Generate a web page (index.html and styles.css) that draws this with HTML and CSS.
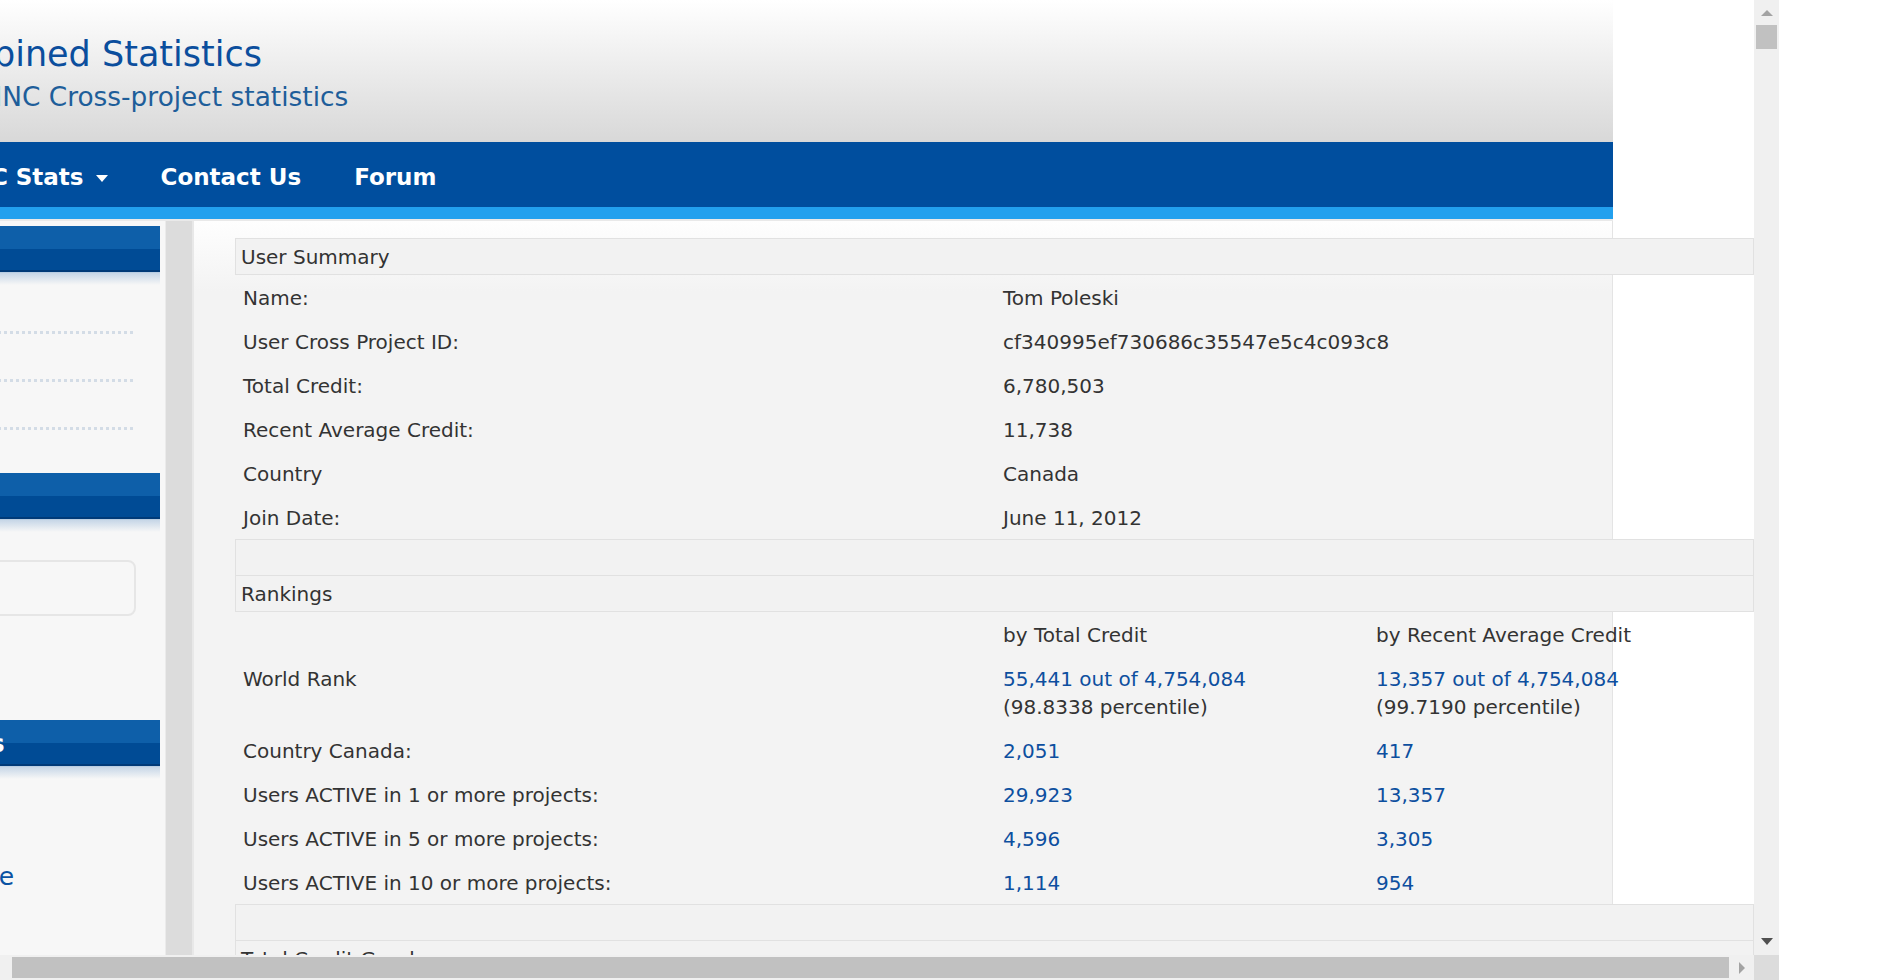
FILE: index.html
```html
<!DOCTYPE html>
<html>
<head>
    <meta charset="UTF-8">
    <title>Combined Statistics - User Summary</title>
    <link rel="stylesheet" href="styles.css">
</head>
<body>
    <div class="screen">
        <div class="viewport">
            <div class="page">
                <header class="masthead">
                    <h1 class="site-title">Combined Statistics</h1>
                    <p class="site-tagline">BOINC Cross-project statistics</p>
                </header>

                <nav class="topnav">
                    <a href="#" class="dropdown">BOINC Stats<span class="caret"></span></a>
                    <a href="#">Contact Us</a>
                    <a href="#">Forum</a>
                </nav>

                <div class="content">
                    <aside class="sidebar">
                        <div class="side-head">Menu</div>
                        <ul class="side-list">
                            <li></li>
                            <li></li>
                            <li></li>
                        </ul>

                        <div class="side-head">Search</div>
                        <div class="search-box"></div>

                        <div class="side-head side-head-long">Project Links</div>
                        <ul class="side-links">
                            <li><a href="#">Your Profile</a></li>
                        </ul>
                    </aside>

                    <div class="gutter"></div>

                    <main class="main">
                        <table class="stats">
                            <colgroup>
                                <col class="col-label">
                                <col class="col-total">
                                <col class="col-recent">
                            </colgroup>
                            <tbody>
                                <tr class="head"><th colspan="3">User Summary</th></tr>
                                <tr><td>Name:</td><td colspan="2">Tom Poleski</td></tr>
                                <tr><td>User Cross Project ID:</td><td colspan="2">cf340995ef730686c35547e5c4c093c8</td></tr>
                                <tr><td>Total Credit:</td><td colspan="2">6,780,503</td></tr>
                                <tr><td>Recent Average Credit:</td><td colspan="2">11,738</td></tr>
                                <tr><td>Country</td><td colspan="2">Canada</td></tr>
                                <tr><td>Join Date:</td><td colspan="2">June 11, 2012</td></tr>

                                <tr class="head"><th colspan="3">&nbsp;</th></tr>
                                <tr class="head"><th colspan="3">Rankings</th></tr>
                                <tr><td></td><td>by Total Credit</td><td>by Recent Average Credit</td></tr>
                                <tr>
                                    <td>World Rank</td>
                                    <td><a href="#">55,441 out of 4,754,084</a><br>(98.8338 percentile)</td>
                                    <td><a href="#">13,357 out of 4,754,084</a><br>(99.7190 percentile)</td>
                                </tr>
                                <tr><td>Country Canada:</td><td><a href="#">2,051</a></td><td><a href="#">417</a></td></tr>
                                <tr><td>Users ACTIVE in 1 or more projects:</td><td><a href="#">29,923</a></td><td><a href="#">13,357</a></td></tr>
                                <tr><td>Users ACTIVE in 5 or more projects:</td><td><a href="#">4,596</a></td><td><a href="#">3,305</a></td></tr>
                                <tr><td>Users ACTIVE in 10 or more projects:</td><td><a href="#">1,114</a></td><td><a href="#">954</a></td></tr>

                                <tr class="head"><th colspan="3">&nbsp;</th></tr>
                                <tr class="head"><th colspan="3">Total Credit Graph</th></tr>
                                <tr><td colspan="3">&nbsp;</td></tr>
                            </tbody>
                        </table>
                    </main>
                </div>
            </div>
        </div>

        <div class="vscroll">
            <span class="arrow-up"></span>
            <span class="thumb"></span>
            <span class="arrow-down"></span>
        </div>
        <div class="hscroll">
            <span class="thumb"></span>
            <span class="arrow-right"></span>
        </div>
        <div class="corner"></div>
    </div>
</body>
</html>
```

FILE: styles.css
```css
:root {
    --title-color: #0b4e9d;
    --nav-color: #004e9e;
    --nav-strip: #22a0ee;
    --link-color: #0d4f9f;
    --text-color: #333333;
    --panel-color: #f3f3f3;
    --side-color: #f7f7f7;
}

* {
    box-sizing: border-box;
}

body {
    margin: 0;
    background-color: #ffffff;
    font-family: "DejaVu Sans", Verdana, sans-serif;
}

/* browser frame: page + scrollbars */
.screen {
    display: grid;
    grid-template-columns: 1754px 25px;
    grid-template-rows: 955px 25px;
    width: 1779px;
    height: 980px;
}

.viewport {
    overflow: hidden;
    background-color: #ffffff;
}

.page {
    width: 1813px;
    margin-left: -200px;
}

/* header */
.masthead {
    height: 142px;
    padding: 33px 0 0 113px;
    background: linear-gradient(#ffffff, #d8d8d8);
}

.site-title {
    margin: 0;
    font-size: 35px;
    font-weight: normal;
    line-height: 42px;
    color: var(--title-color);
}

.site-tagline {
    margin: 7px 0 0 43px;
    font-size: 26.4px;
    line-height: 30px;
    color: #1e5e9a;
}

/* navigation */
.topnav {
    display: flex;
    gap: 53px;
    height: 77px;
    padding: 5px 0 0 126px;
    background: linear-gradient(var(--nav-color) 0 65px, var(--nav-strip) 65px);
}

.topnav a {
    display: flex;
    align-items: center;
    height: 60px;
    color: #ffffff;
    font-size: 23px;
    font-weight: bold;
    text-decoration: none;
}

.caret {
    width: 0;
    height: 0;
    margin: 3px 0 0 12px;
    border-left: 6px solid transparent;
    border-right: 6px solid transparent;
    border-top: 7px solid #ffffff;
}

/* body columns */
.content {
    display: flex;
    border-top: 2px solid #e9e9e9;
}

.sidebar {
    width: 366px;
    padding: 5px 5px 60px 0;
    background-color: var(--side-color);
    border-right: 1px solid #ebebeb;
}

.gutter {
    width: 28px;
    background-color: #dcdcdc;
    border-right: 2px solid #e8e8e8;
}

.main {
    width: 1419px;
    padding: 17px 0 40px 41px;
    background: linear-gradient(#fefefe, var(--panel-color) 70px);
    border-right: 1px solid #e4e4e4;
}

/* sidebar */
.side-head {
    height: 59px;
    padding: 0 0 12px 15px;
    color: #ffffff;
    font-size: 25px;
    font-weight: bold;
    line-height: 47px;
    white-space: nowrap;
    background:
        linear-gradient(#0e5fa9 0 23px, #004b95 23px 44px, #003a78 44px 46px, #b9cde2 46px 47px) top / 100% 47px no-repeat,
        linear-gradient(#c6d6e7, var(--side-color)) bottom / 100% 12px no-repeat;
}

.side-head-long {
    margin-top: 104px;
    padding-left: 22px;
}

.side-list {
    list-style: none;
    margin: 0 0 43px;
    padding: 1px 0 0;
}

.side-list li {
    height: 48px;
    margin-right: 26px;
    background: repeating-linear-gradient(to right, #d3dce6 0 3px, transparent 3px 6px) bottom / 100% 3px no-repeat;
}

.search-box {
    height: 56px;
    margin: 28px 24px 0 0;
    border: 2px solid #e6e6e6;
    border-radius: 8px;
    background-color: var(--side-color);
}

.side-links {
    list-style: none;
    margin: 83px 0 0;
    padding: 0 0 0 75px;
}

.side-links a {
    font-size: 25px;
    line-height: 30px;
    color: #0b53a3;
    text-decoration: none;
}

/* stats table */
.stats {
    width: 1519px;
    table-layout: fixed;
    border-collapse: separate;
    border-spacing: 0;
    font-size: 20px;
    line-height: 28px;
    color: var(--text-color);
}

.col-label {
    width: 760px;
}

.col-total {
    width: 373px;
}

.stats th {
    padding: 4px 5px 3px;
    text-align: left;
    font-weight: normal;
    white-space: nowrap;
    background-color: #f2f2f2;
    border: 1px solid #e1e1e1;
}

.stats tr.head + tr.head th {
    border-top: 0;
}

.stats td {
    padding: 9px 8px 7px;
    vertical-align: top;
    white-space: nowrap;
}

.stats a {
    color: var(--link-color);
    text-decoration: none;
}

/* scrollbars */
.vscroll {
    display: flex;
    flex-direction: column;
    align-items: center;
    background-color: #f0f0f0;
}

.vscroll .arrow-up {
    margin-top: 10px;
    border-left: 6px solid transparent;
    border-right: 6px solid transparent;
    border-bottom: 6px solid #a3a3a3;
}

.vscroll .thumb {
    width: 21px;
    height: 24px;
    margin-top: 9px;
    background-color: #c1c1c1;
}

.vscroll .arrow-down {
    margin-top: auto;
    margin-bottom: 10px;
    border-left: 6px solid transparent;
    border-right: 6px solid transparent;
    border-top: 7px solid #505050;
}

.hscroll {
    display: flex;
    align-items: center;
    padding-left: 12px;
    background-color: #f0f0f0;
}

.hscroll .thumb {
    width: 1717px;
    height: 21px;
    background-color: #c1c1c1;
}

.hscroll .arrow-right {
    margin-left: 10px;
    border-top: 6px solid transparent;
    border-bottom: 6px solid transparent;
    border-left: 6px solid #a3a3a3;
}

.corner {
    background-color: #dcdcdc;
}
```
